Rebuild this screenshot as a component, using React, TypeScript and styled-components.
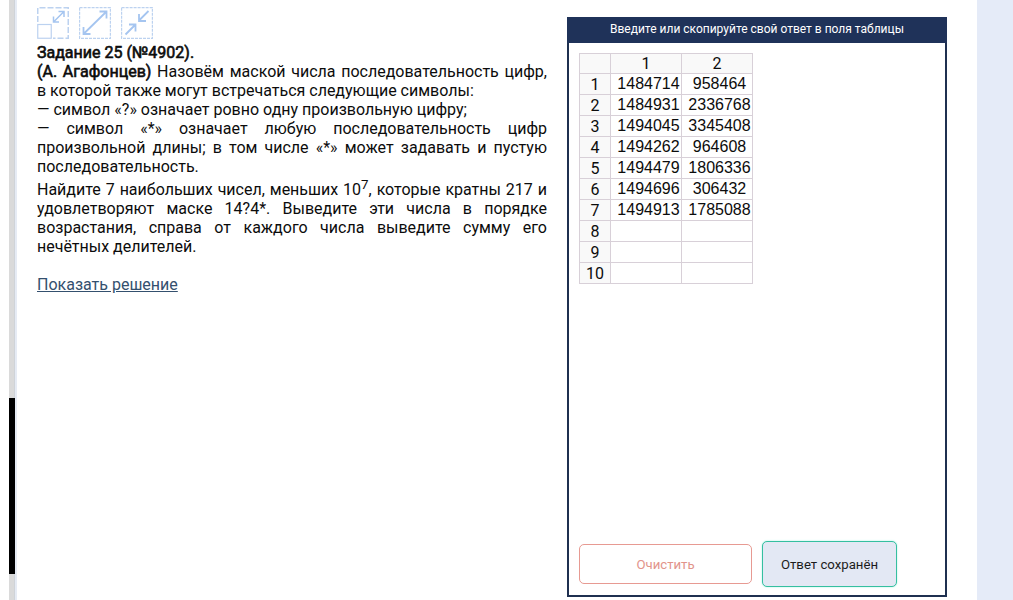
import React from "react";
import styled, { createGlobalStyle } from "styled-components";

const Global = createGlobalStyle`
  body { margin: 0; background: #fff; font-family: Roboto, "Liberation Sans", sans-serif; color: #0c0c0c; overflow: hidden; }
  * { box-sizing: border-box; }
`;
const Page = styled.div`
  display: flex;
  height: 600px;
  width: 1013px;
`;
const ScrollTrack = styled.div`
  width: 8px;
  margin-left: 9px;
  flex: none;
  padding-top: 398px;
  background: linear-gradient(90deg, #dadada 0 5px, #cfd3d8 5px 6px, #e6ebf4 6px 8px);
`;
const ScrollThumb = styled.div`
  width: 6px;
  height: 176px;
  background: #000;
`;
const Task = styled.main`
  width: 510px;
  margin-left: 20px;
  padding-top: 7px;
  flex: none;
  font-size: 16px;
  line-height: 19px;
`;
const Tools = styled.div`
  display: flex;
  gap: 10px;
  height: 36px;
`;
const Line = styled.div<{ $justify?: boolean }>`
  height: 19px;
  white-space: ${(p) => (p.$justify ? "normal" : "nowrap")};
  text-align: ${(p) => (p.$justify ? "justify" : "left")};
  text-align-last: ${(p) => (p.$justify ? "justify" : "left")};
`;
const Strong = styled.span`
  -webkit-text-stroke: 0.6px #0c0c0c;
`;
const Paragraph = styled.div`
  padding-top: 4px;
`;
const Sup = styled.sup`
  font-size: 13.3px;
  line-height: 0;
`;
const Solution = styled.a`
  display: inline-block;
  margin-top: 19px;
  color: #34506e;
  text-decoration: underline;
`;
const Panel = styled.section`
  width: 380px;
  height: 580px;
  margin: 17px 30px 0 20px;
  flex: none;
  border: 2px solid #1f3050;
  border-top: 0;
  display: flex;
  flex-direction: column;
`;
const PanelTitle = styled.header`
  height: 26px;
  margin: 0 -2px;
  background: #1f3259;
  color: #fff;
  font-size: 12px;
  line-height: 24px;
  text-align: center;
`;
const Table = styled.table`
  border-collapse: collapse;
  table-layout: fixed;
  width: 174px;
  margin: 10px 0 0 10px;
  font-size: 16px;
`;
const Head = styled.th<{ $w?: number; $top?: boolean }>`
  ${(p) => (p.$w ? `width: ${p.$w}px;` : "")}
  height: ${(p) => (p.$top ? 20 : 21)}px;
  padding: ${(p) => (p.$top ? 0 : 1)}px 0 0;
  border: 1px solid #d8d0d8;
  background: #f9f9f9;
  font-weight: 400;
  line-height: 18px;
`;
const Cell = styled.td`
  height: 21px;
  padding: 0 0 0 5px;
  border: 1px solid #d8d0d8;
  font-family: "Liberation Sans", Arial, sans-serif;
  line-height: 18px;
  text-align: center;
  white-space: nowrap;
`;
const Actions = styled.footer`
  display: flex;
  align-items: center;
  gap: 10px;
  margin: auto 0 8px 10px;
`;
const Button = styled.button<{ $saved?: boolean }>`
  width: ${(p) => (p.$saved ? 135 : 173)}px;
  height: ${(p) => (p.$saved ? 46 : 40)}px;
  padding: 0;
  border: 1px solid ${(p) => (p.$saved ? "#35bfa0" : "#e79a92")};
  border-radius: 5px;
  background: ${(p) => (p.$saved ? "#e3e8f4" : "#fff")};
  color: ${(p) => (p.$saved ? "#1c1c1c" : "#e2948b")};
  box-shadow: ${(p) => (p.$saved ? "0 0 2px #9ff0e0" : "none")};
  font: 13.2px Roboto, sans-serif;
`;
const Sidebar = styled.aside`
  flex: 1;
  background: #e5ebf8;
`;

const ToolIcon = ({ kind }: { kind: "partial" | "expand" | "shrink" }) => (
  <svg width="32" height="32" viewBox="0 0 32 32" fill="none" stroke="#a5c5f0">
    {kind === "partial" ? (
      <>
        <path d="M.75 15V.75H31.25V31.25H16" stroke="#bcd2f0" strokeDasharray="6 2" strokeWidth="1.5" />
        <rect x=".75" y="17.5" width="13.5" height="13.75" stroke="#bcd2f0" strokeWidth="1.2" />
        <path d="M16.5 15 27 4.5M21.5 4.5H27V10M16.5 9.5V15H22" strokeWidth="1.5" />
      </>
    ) : (
      <rect x=".6" y=".6" width="30.8" height="30.8" stroke="#bcd2f0" strokeDasharray="3 1" strokeWidth="1.2" />
    )}
    {kind === "expand" && <path d="M4.5 27 27.5 4.5M20.5 4.5h7V11.5M4.5 20v7H11.5" strokeWidth="1.8" />}
    {kind === "shrink" && <path d="M27.5 4 18 13.5M18 7v7h7M4.5 27.5 14.5 17.5M8 17.5h6.5V24.5" strokeWidth="1.8" />}
  </svg>
);

const rows: [string, string][] = [
  ["1484714", "958464"],
  ["1484931", "2336768"],
  ["1494045", "3345408"],
  ["1494262", "964608"],
  ["1494479", "1806336"],
  ["1494696", "306432"],
  ["1494913", "1785088"],
  ["", ""],
  ["", ""],
  ["", ""],
];

export default function App() {
  return (
    <Page>
      <Global />
      <ScrollTrack>
        <ScrollThumb />
      </ScrollTrack>
      <Task>
        <Tools>
          <ToolIcon kind="partial" />
          <ToolIcon kind="expand" />
          <ToolIcon kind="shrink" />
        </Tools>
        <Line><Strong>Задание 25 (№4902).</Strong></Line>
        <Line $justify><Strong>(А. Агафонцев)</Strong> Назовём маской числа последовательность цифр,</Line>
        <Line>в которой также могут встречаться следующие символы:</Line>
        <Line>— символ «?» означает ровно одну произвольную цифру;</Line>
        <Line $justify>— символ «*» означает любую последовательность цифр</Line>
        <Line $justify>произвольной длины; в том числе «*» может задавать и пустую</Line>
        <Line>последовательность.</Line>
        <Paragraph>
          <Line $justify>Найдите 7 наибольших чисел, меньших 10<Sup>7</Sup>, которые кратны 217 и</Line>
          <Line $justify>удовлетворяют маске 14?4*. Выведите эти числа в порядке</Line>
          <Line $justify>возрастания, справа от каждого числа выведите сумму его</Line>
          <Line>нечётных делителей.</Line>
        </Paragraph>
        <Solution>Показать решение</Solution>
      </Task>
      <Panel>
        <PanelTitle>Введите или скопируйте свой ответ в поля таблицы</PanelTitle>
        <Table>
          <thead>
            <tr>
              <Head $w={31} $top />
              <Head $w={71} $top>1</Head>
              <Head $w={71} $top>2</Head>
            </tr>
          </thead>
          <tbody>
            {rows.map(([a, b], i) => (
              <tr key={i}>
                <Head>{i + 1}</Head>
                <Cell>{a}</Cell>
                <Cell>{b}</Cell>
              </tr>
            ))}
          </tbody>
        </Table>
        <Actions>
          <Button>Очистить</Button>
          <Button $saved>Ответ сохранён</Button>
        </Actions>
      </Panel>
      <Sidebar />
    </Page>
  );
}
